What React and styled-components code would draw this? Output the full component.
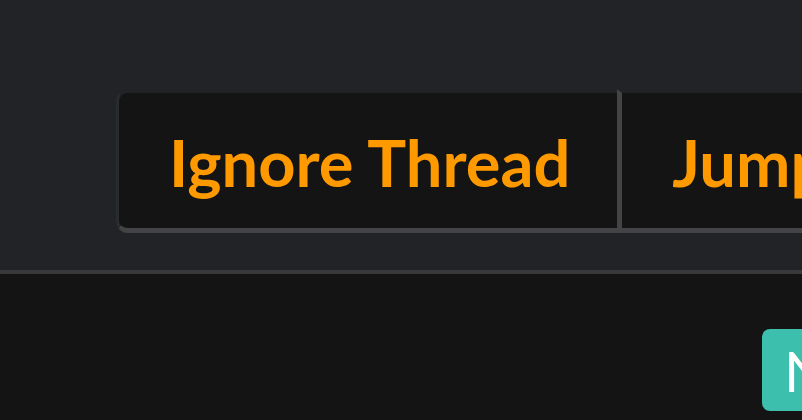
import React from "react";
import styled, { createGlobalStyle } from "styled-components";

const Global = createGlobalStyle`
  html, body { margin: 0; padding: 0; background: #141414; }
  body { width: 802px; height: 420px; overflow: hidden; font-family: Lato, "Open Sans", sans-serif; }
  #root { width: 802px; height: 420px; overflow: hidden; }
`;

const Page = styled.div`
  display: flex;
  flex-direction: column;
  width: 802px;
  height: 420px;
`;

const TopBar = styled.div`
  flex: none;
  height: 274px;
  box-sizing: border-box;
  background: #222326;
  border-bottom: 4px solid #38393b;
  padding: 89px 0 0 116px;
  display: flex;
  align-items: flex-start;
`;

const ButtonGroup = styled.div`
  display: flex;
  flex-wrap: nowrap;
`;

const ActionButton = styled.button`
  flex: none;
  height: 144px;
  box-sizing: border-box;
  padding: 2px ${(p) => (p.$first ? "47px" : "50px")} 0 50px;
  background: #141414;
  color: #ff9900;
  font-family: Lato, "Open Sans", sans-serif;
  font-weight: 700;
  font-size: 65px;
  white-space: nowrap;
  border-style: solid;
  border-width: 4px 0 5px ${(p) => (p.$first ? "3px" : "5px")};
  border-top-color: #222326;
  border-bottom-color: #444446;
  border-left-color: ${(p) => (p.$first ? "#2a2b2d" : "#444446")};
  border-radius: ${(p) => (p.$first ? "12px 0 0 12px" : "0")};
  display: flex;
  align-items: center;
  cursor: pointer;
`;

const Bottom = styled.div`
  flex: 1;
  background: #141414;
  padding: 55px 0 0 762px;
  display: flex;
  align-items: flex-start;
`;

const TealButton = styled.button`
  flex: none;
  height: 82px;
  box-sizing: border-box;
  padding: 0 22px;
  background: #3dbfad;
  color: #ffffff;
  border: none;
  border-radius: 8px;
  font-family: Lato, "Open Sans", sans-serif;
  font-weight: 400;
  font-size: 57px;
  white-space: nowrap;
  display: flex;
  align-items: center;
`;

export default function App() {
  return (
    <>
      <Global />
      <Page>
        <TopBar>
          <ButtonGroup>
            <ActionButton $first>Ignore Thread</ActionButton>
            <ActionButton>Jump to Latest</ActionButton>
          </ButtonGroup>
        </TopBar>
        <Bottom>
          <TealButton>New</TealButton>
        </Bottom>
      </Page>
    </>
  );
}
